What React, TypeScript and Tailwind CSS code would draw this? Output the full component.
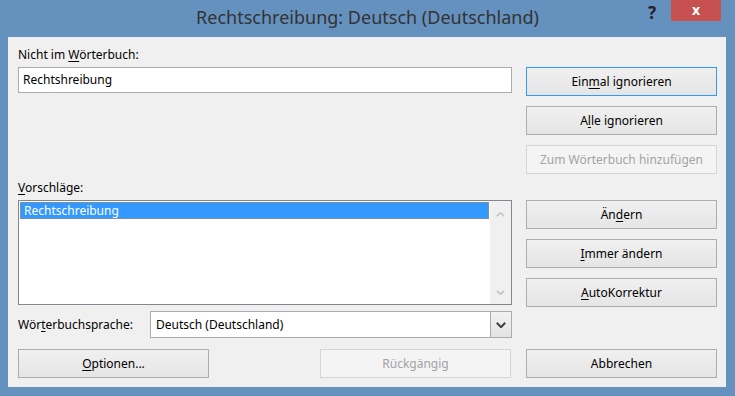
import React from "react";

function Btn({
  children,
  focused,
  disabled,
}: {
  children: React.ReactNode;
  focused?: boolean;
  disabled?: boolean;
}) {
  const cls = disabled
    ? "border-[#d5d5d5] bg-[#f4f4f4] text-[#a3a3a3]"
    : focused
    ? "border-[#3399ff] bg-gradient-to-b from-[#f0f0f0] to-[#e5e5e5] text-black"
    : "border-[#adadad] bg-gradient-to-b from-[#f0f0f0] to-[#e5e5e5] text-black";
  return (
    <div
      className={
        "flex h-[29px] w-[191px] items-center justify-center border text-[12px] leading-[16px] " +
        cls
      }
    >
      <span>{children}</span>
    </div>
  );
}

function U({ children }: { children: React.ReactNode }) {
  return <span className="underline decoration-1 underline-offset-[2px]">{children}</span>;
}

function Chevron({ up, color, w = 9, h = 5, sw = 1.6 }: { up?: boolean; color: string; w?: number; h?: number; sw?: number }) {
  return (
    <svg width={w} height={h} viewBox={`0 0 ${w} ${h}`}>
      <polyline
        points={up ? `0.8,${h - 0.8} ${w / 2},0.8 ${w - 0.8},${h - 0.8}` : `0.8,0.8 ${w / 2},${h - 0.8} ${w - 0.8},0.8`}
        fill="none"
        stroke={color}
        strokeWidth={sw}
      />
    </svg>
  );
}

export default function App() {
  return (
    <div className="flex h-[396px] w-[735px] flex-col bg-[#6591bf] font-['Noto_Sans',sans-serif]">
      {/* Title bar */}
      <div className="relative flex h-[37px] items-start justify-center">
        <div className="pt-[5px] text-[18px] leading-[24px] text-[#333333]">
          Rechtschreibung: Deutsch (Deutschland)
        </div>
        <div className="absolute left-[648px] top-[1px] text-[17px] font-bold leading-[24px] text-[#222]">?</div>
        <div className="absolute left-[671px] top-0 flex h-[21px] w-[50px] items-center justify-center bg-[#c75050] pb-[2px] text-[14px] font-bold leading-none text-white">
          x
        </div>
      </div>

      {/* Client area */}
      <div className="ml-[8px] mr-[9px] flex h-[350px] flex-col bg-[#f0f0f0] pl-[10px] pr-[9px] pt-[10px] text-[12px] leading-[16px] text-black">
        <div className="mb-[4px] h-[16px]">
          Nicht im <U>W</U>örterbuch:
        </div>

        {/* Row with input and top buttons */}
        <div className="flex gap-[14px]">
          <div className="w-[494px]">
            <div className="flex h-[26px] items-center border border-[#acacac] bg-white pl-[4px]">
              Rechtshreibung
            </div>
          </div>
          <div className="flex flex-col gap-[10px]">
            <Btn focused>
              Ein<U>m</U>al ignorieren
            </Btn>
            <Btn>
              A<U>l</U>le ignorieren
            </Btn>
            <Btn disabled>Zum Wörterbuch hinzufügen</Btn>
          </div>
        </div>

        <div className="mb-[4px] mt-[6px] h-[16px]">
          <U>V</U>orschläge:
        </div>

        {/* List and middle buttons */}
        <div className="flex gap-[14px]">
          <div className="flex w-[494px] flex-col">
            <div className="flex h-[105px] border border-[#828790] bg-white">
              <div className="flex-1 p-[1px]">
                <div className="flex h-[17px] items-center border border-dotted border-[#b98a55] bg-[#3399ff] pl-[3px] text-white">
                  Rechtschreibung
                </div>
              </div>
              <div className="flex w-[21px] flex-col items-center justify-between bg-[#f0f0f0] pb-[9px] pt-[11px]">
                <Chevron up color="#c4c4c4" />
                <Chevron color="#c4c4c4" />
              </div>
            </div>
            <div className="mt-[6px] flex h-[27px] items-center">
              <div className="w-[132px]">
                Wör<U>t</U>erbuchsprache:
              </div>
              <div className="flex h-[27px] flex-1 border border-[#acacac] bg-white">
                <div className="flex flex-1 items-center pl-[5px]">Deutsch (Deutschland)</div>
                <div className="flex w-[21px] items-center justify-center border-l border-[#acacac] bg-gradient-to-b from-[#f2f2f2] to-[#e3e3e3]">
                  <Chevron color="#404040" w={10} h={6} sw={2} />
                </div>
              </div>
            </div>
          </div>
          <div className="flex flex-col gap-[10px]">
            <Btn>
              Än<U>d</U>ern
            </Btn>
            <Btn>
              <U>I</U>mmer ändern
            </Btn>
            <Btn>
              <U>A</U>utoKorrektur
            </Btn>
          </div>
        </div>

        {/* Bottom row */}
        <div className="mt-[11px] flex gap-[14px]">
          <div className="flex w-[494px] justify-between">
            <Btn>
              <U>O</U>ptionen...
            </Btn>
            <div className="mr-[1px]">
              <Btn disabled>Rückgängig</Btn>
            </div>
          </div>
          <Btn>Abbrechen</Btn>
        </div>
      </div>
    </div>
  );
}
